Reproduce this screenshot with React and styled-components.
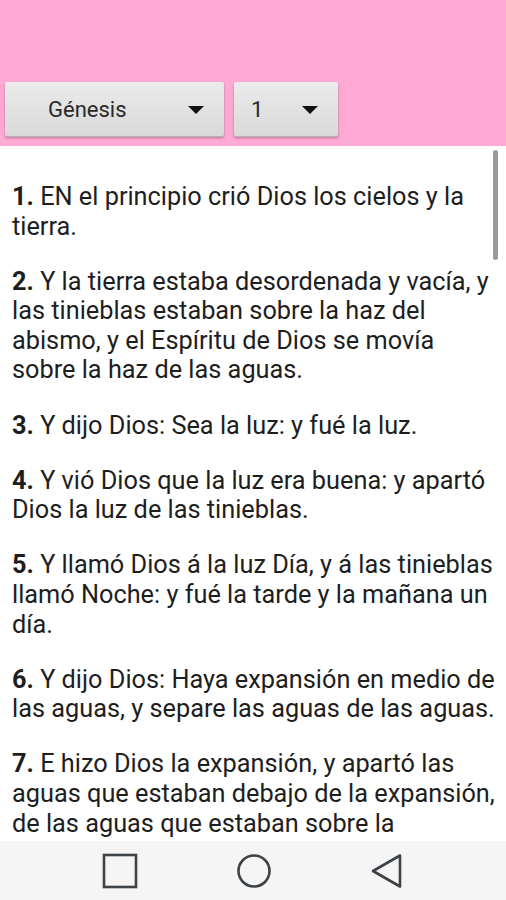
import React from "react";
import { styled, createGlobalStyle } from "styled-components";

const GlobalStyle = createGlobalStyle`
  html, body {
    margin: 0;
    padding: 0;
    background: #ffffff;
  }
  body {
    font-family: Roboto, "Noto Sans", sans-serif;
  }
`;

const verses = [
  "EN el principio crió Dios los cielos y la tierra.",
  "Y la tierra estaba desordenada y vacía, y las tinieblas estaban sobre la haz del abismo, y el Espíritu de Dios se movía sobre la haz de las aguas.",
  "Y dijo Dios: Sea la luz: y fué la luz.",
  "Y vió Dios que la luz era buena: y apartó Dios la luz de las tinieblas.",
  "Y llamó Dios á la luz Día, y á las tinieblas llamó Noche: y fué la tarde y la mañana un día.",
  "Y dijo Dios: Haya expansión en medio de las aguas, y separe las aguas de las aguas.",
  "E hizo Dios la expansión, y apartó las aguas que estaban debajo de la expansión, de las aguas que estaban sobre la expansión: y fué así.",
];

function App() {
  return (
    <Screen>
      <GlobalStyle />
      <Header>
        <Spinner $width={219}>
          <SpinnerLabel>Génesis</SpinnerLabel>
          <Arrow />
        </Spinner>
        <Spinner $width={104} $small>
          <SpinnerLabel>1</SpinnerLabel>
          <Arrow />
        </Spinner>
      </Header>
      <Reader>
        <Verses>
          {verses.map((text, i) => (
            <Verse key={i}>
              <b>{i + 1}.</b> {text}
            </Verse>
          ))}
        </Verses>
        <Scrollbar />
      </Reader>
      <NavBar>
        <svg width="36" height="36" viewBox="0 0 36 36">
          <rect x="2" y="2" width="32" height="32" fill="none" stroke="#3d4247" strokeWidth="2.6" />
        </svg>
        <svg width="36" height="36" viewBox="0 0 36 36">
          <circle cx="18" cy="18" r="15.5" fill="none" stroke="#3d4247" strokeWidth="2.6" />
        </svg>
        <svg width="34" height="36" viewBox="0 0 34 36">
          <path d="M30 2.5 L3 18 L30 33.5 Z" fill="none" stroke="#3d4247" strokeWidth="2.6" strokeLinejoin="round" />
        </svg>
      </NavBar>
    </Screen>
  );
}

export default App;

const Screen = styled.div`
  width: 506px;
  height: 900px;
  display: flex;
  flex-direction: column;
  overflow: hidden;
`;

const Header = styled.div`
  height: 146px;
  flex-shrink: 0;
  background-color: #ffa9d5;
  display: flex;
  align-items: flex-end;
  gap: 10px;
  padding: 0 0 10px 5px;
  box-sizing: border-box;
`;

const Spinner = styled.div`
  width: ${(p) => p.$width}px;
  height: 54px;
  box-sizing: border-box;
  background: linear-gradient(#ebebeb, #d9d9d9);
  border-radius: 2px;
  box-shadow: 0 1px 0 #b9b0b5, 0 2px 3px rgba(0, 0, 0, 0.3);
  display: flex;
  align-items: center;
  justify-content: space-between;
  padding: 0 20px 0 ${(p) => (p.$small ? 17 : 43)}px;
`;

const SpinnerLabel = styled.span`
  font-size: 22px;
  color: #2a2a2a;
`;

const Arrow = styled.span`
  width: 0;
  height: 0;
  border-left: 8px solid transparent;
  border-right: 8px solid transparent;
  border-top: 8px solid #111;
  margin-top: 2px;
`;

const Reader = styled.div`
  flex: 1;
  position: relative;
  overflow: hidden;
  background: #fff;
`;

const Verses = styled.div`
  padding: 36px 6px 0 12px;
  display: flex;
  flex-direction: column;
  gap: 25.5px;
`;

const Verse = styled.p`
  margin: 0;
  font-size: 25.3px;
  line-height: 29.6px;
  color: #1e1e1e;
  b {
    font-weight: 700;
  }
`;

const Scrollbar = styled.div`
  position: absolute;
  top: 4px;
  right: 8px;
  width: 5px;
  height: 110px;
  border-radius: 3px;
  background: #9b9b9b;
`;

const NavBar = styled.div`
  height: 59px;
  flex-shrink: 0;
  background: #f5f5f5;
  display: flex;
  align-items: center;
  justify-content: center;
  gap: 98px;
`;
